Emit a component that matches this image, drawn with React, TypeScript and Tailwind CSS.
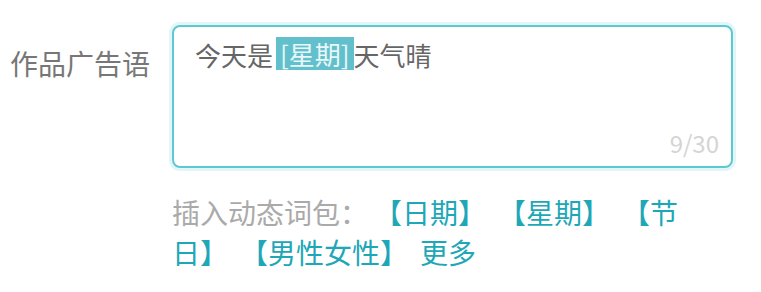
const font = { fontFamily: '"Noto Sans CJK SC", "Noto Sans", sans-serif' };

const tags = ['【日期】', '【星期】', '【节日】', '【男性女性】'];

export default function App() {
  return (
    <div className="w-[761px] h-[292px] bg-white [text-spacing-trim:space-all]" style={font}>
      <div className="flex pt-[25px]">
        <div className="w-[150px] shrink-0 pt-[20px] text-right text-[28px] leading-[36px] text-[#777]">
          作品广告语
        </div>
        <div className="ml-[22px] flex flex-col">
          <div className="relative h-[143px] w-[561px] rounded-[8px] border-2 border-[#5cc8d1] shadow-[0_0_0_3px_rgba(92,200,209,0.18)] px-[21px] pt-[10px]">
            <div className="text-[26px] leading-[36px] text-[#666]">
              今天是
              <span className="ml-[3px] inline-block h-[33px] bg-[#62c0cc] px-[4px] align-top leading-[33px] text-[#e8f7f9]">
                [星期]
              </span>
              天气晴
            </div>
            <div className="absolute bottom-[9px] right-[12px] text-[24px] leading-[28px] text-[#d4d4d4]">
              9/30
            </div>
          </div>
          <div className="mt-[24px] w-[520px] text-[28px] leading-[40px] text-[#aaa]">
            插入动态词包：
            {tags.map((t, i) => (
              <span key={t} className={i === 0 ? 'ml-[6px] mr-[12px] text-[#1ea7b7]' : 'mr-[12px] text-[#1ea7b7]'}>
                {t}
              </span>
            ))}
            <span className="text-[#1ea7b7]">更多</span>
          </div>
        </div>
      </div>
    </div>
  );
}
